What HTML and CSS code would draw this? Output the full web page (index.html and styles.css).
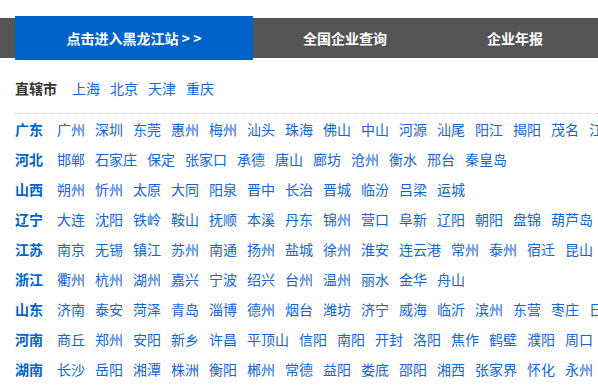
FILE: index.html
```html
<!DOCTYPE html>
<html lang="zh-CN">
<head>
<meta charset="UTF-8" />
<meta name="viewport" content="width=device-width, initial-scale=1" />
<title>企业信息查询 - 地区导航</title>
<link rel="stylesheet" href="styles.css">
</head>
<body>
  <div class="nav">
    <a class="nav-item actif" href="#">点击进入黑龙江站 &gt; &gt;</a>
    <a class="nav-item" href="#">全国企业查询</a>
    <a class="nav-item dernier" href="#">企业年报</a>
  </div>

  <div class="zone">
    <div class="ligne direct">
      <span class="libelle">直辖市</span>
      <a href="#">上海</a><a href="#">北京</a><a href="#">天津</a><a href="#">重庆</a>
    </div>

    <div class="liste">
      <div class="ligne">
        <span class="province">广东</span>
        <a href="#">广州</a><a href="#">深圳</a><a href="#">东莞</a><a href="#">惠州</a><a href="#">梅州</a><a href="#">汕头</a><a href="#">珠海</a><a href="#">佛山</a><a href="#">中山</a><a href="#">河源</a><a href="#">汕尾</a><a href="#">阳江</a><a href="#">揭阳</a><a href="#">茂名</a><a href="#">江门</a><a href="#">湛江</a>
      </div>
      <div class="ligne">
        <span class="province">河北</span>
        <a href="#">邯郸</a><a href="#">石家庄</a><a href="#">保定</a><a href="#">张家口</a><a href="#">承德</a><a href="#">唐山</a><a href="#">廊坊</a><a href="#">沧州</a><a href="#">衡水</a><a href="#">邢台</a><a href="#">秦皇岛</a>
      </div>
      <div class="ligne">
        <span class="province">山西</span>
        <a href="#">朔州</a><a href="#">忻州</a><a href="#">太原</a><a href="#">大同</a><a href="#">阳泉</a><a href="#">晋中</a><a href="#">长治</a><a href="#">晋城</a><a href="#">临汾</a><a href="#">吕梁</a><a href="#">运城</a>
      </div>
      <div class="ligne">
        <span class="province">辽宁</span>
        <a href="#">大连</a><a href="#">沈阳</a><a href="#">铁岭</a><a href="#">鞍山</a><a href="#">抚顺</a><a href="#">本溪</a><a href="#">丹东</a><a href="#">锦州</a><a href="#">营口</a><a href="#">阜新</a><a href="#">辽阳</a><a href="#">朝阳</a><a href="#">盘锦</a><a href="#">葫芦岛</a>
      </div>
      <div class="ligne">
        <span class="province">江苏</span>
        <a href="#">南京</a><a href="#">无锡</a><a href="#">镇江</a><a href="#">苏州</a><a href="#">南通</a><a href="#">扬州</a><a href="#">盐城</a><a href="#">徐州</a><a href="#">淮安</a><a href="#">连云港</a><a href="#">常州</a><a href="#">泰州</a><a href="#">宿迁</a><a href="#">昆山</a>
      </div>
      <div class="ligne">
        <span class="province">浙江</span>
        <a href="#">衢州</a><a href="#">杭州</a><a href="#">湖州</a><a href="#">嘉兴</a><a href="#">宁波</a><a href="#">绍兴</a><a href="#">台州</a><a href="#">温州</a><a href="#">丽水</a><a href="#">金华</a><a href="#">舟山</a>
      </div>
      <div class="ligne">
        <span class="province">山东</span>
        <a href="#">济南</a><a href="#">泰安</a><a href="#">菏泽</a><a href="#">青岛</a><a href="#">淄博</a><a href="#">德州</a><a href="#">烟台</a><a href="#">潍坊</a><a href="#">济宁</a><a href="#">威海</a><a href="#">临沂</a><a href="#">滨州</a><a href="#">东营</a><a href="#">枣庄</a><a href="#">日照</a>
      </div>
      <div class="ligne">
        <span class="province">河南</span>
        <a href="#">商丘</a><a href="#">郑州</a><a href="#">安阳</a><a href="#">新乡</a><a href="#">许昌</a><a href="#">平顶山</a><a href="#">信阳</a><a href="#">南阳</a><a href="#">开封</a><a href="#">洛阳</a><a href="#">焦作</a><a href="#">鹤壁</a><a href="#">濮阳</a><a href="#">周口</a><a href="#">漯河</a>
      </div>
      <div class="ligne">
        <span class="province">湖南</span>
        <a href="#">长沙</a><a href="#">岳阳</a><a href="#">湘潭</a><a href="#">株洲</a><a href="#">衡阳</a><a href="#">郴州</a><a href="#">常德</a><a href="#">益阳</a><a href="#">娄底</a><a href="#">邵阳</a><a href="#">湘西</a><a href="#">张家界</a><a href="#">怀化</a><a href="#">永州</a>
      </div>
    </div>
  </div>
</body>
</html>
```

FILE: styles.css
```css
:root {
  --bleu: #0063c9;
  --lien: #1166d6;
  --gris-nav: #545454;
  --police: "Noto Sans CJK SC", "Noto Sans", sans-serif;
}
body {
  margin: 0;
  background: white;
  font-family: var(--police);
  font-size: 14px;
  color: #333;
  overflow: hidden;
}
a {
  text-decoration: none;
}
.nav {
  display: flex;
  align-items: center;
  height: 40px;
  margin-top: 18px;
  padding-left: 15px;
  background: var(--gris-nav);
}
.nav-item {
  display: flex;
  align-items: center;
  justify-content: center;
  height: 40px;
  width: 184px;
  color: white;
  font-weight: 700;
  font-size: 14px;
}
.nav-item.actif {
  width: 238px;
  height: 44px;
  background: var(--bleu);
}
.nav-item.dernier {
  width: 156px;
}
.zone {
  padding: 15px 0 0 15px;
}
.ligne {
  display: flex;
  align-items: center;
  height: 30px;
  white-space: nowrap;
}
.ligne a {
  color: var(--lien);
  margin-right: 10px;
  flex-shrink: 0;
}
.direct {
  padding-bottom: 10px;
  border-bottom: 1px dotted #ccc;
}
.direct .libelle {
  font-weight: 700;
  color: #333;
  margin-right: 15px;
}
.province {
  font-weight: 700;
  color: var(--bleu);
  margin-right: 14px;
  flex-shrink: 0;
}
```
